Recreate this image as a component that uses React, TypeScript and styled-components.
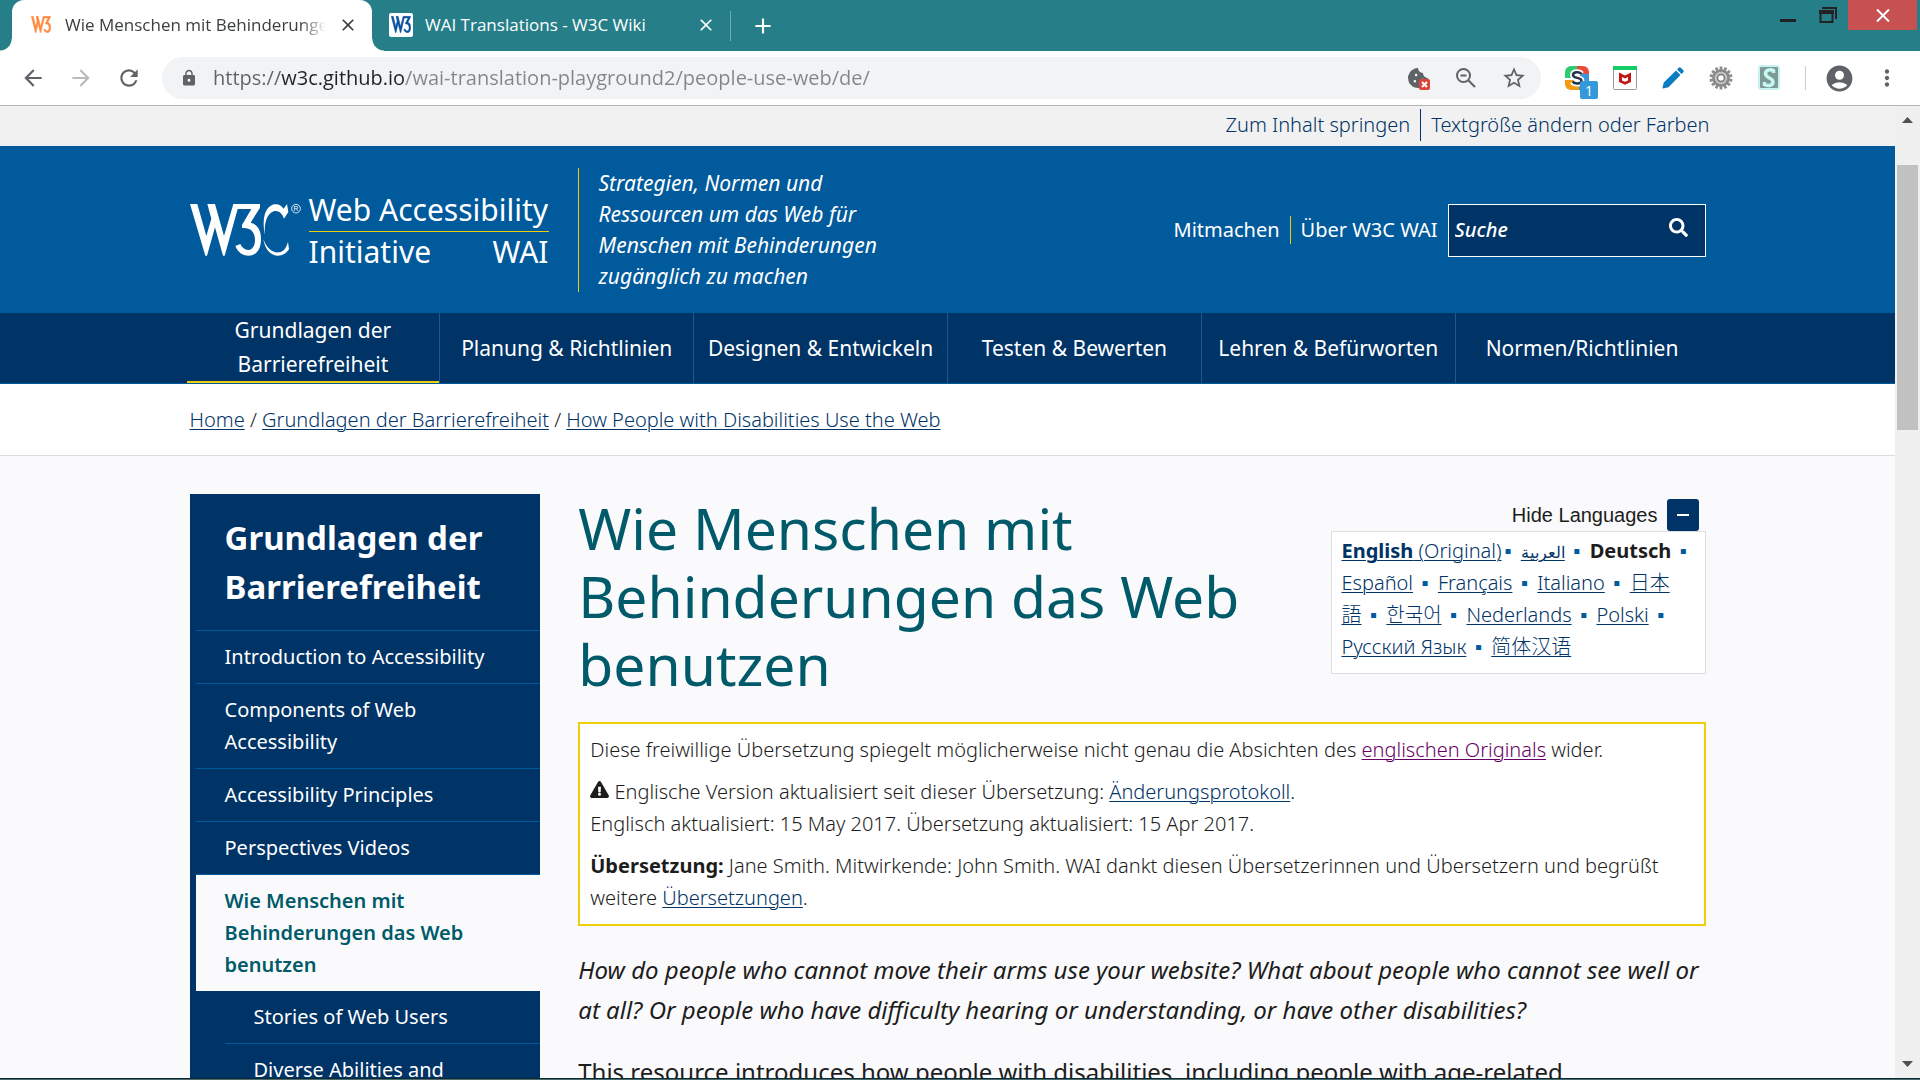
import React from 'react';
import styled, { createGlobalStyle, css } from 'styled-components';
import {
  MdAdd,
  MdAccountCircle,
  MdArrowBack,
  MdArrowForward,
  MdClose,
  MdLock,
  MdMoreVert,
  MdRefresh,
  MdStarBorder,
} from 'react-icons/md';
import { FaCookieBite, FaExclamationTriangle, FaSearch } from 'react-icons/fa';

const color = {
  teal: '#257e88',
  navy: '#003366',
  blue: '#005a9c',
  yellow: '#eed009',
  pale: '#fafafc',
  heading: '#005a6a',
  text: '#1d1d1d',
  visited: '#660066',
  chrome: '#5f6368',
};

const GlobalStyle = createGlobalStyle`
  *, *::before, *::after { box-sizing: border-box; }
  body {
    margin: 0;
    overflow: hidden;
    font-family: 'Noto Sans', 'Noto Sans CJK SC', sans-serif;
    color: ${color.text};
  }
  a { color: ${color.navy}; text-decoration-thickness: 1px; text-underline-offset: 2px; }
  strong { font-weight: 700; }
  button { border: 0; padding: 0; background: none; color: inherit; font: inherit; }
  ul { list-style: none; margin: 0; padding: 0; }
  p, h1, h2 { margin: 0; }
`;

/* ---------- browser window ---------- */

const Window = styled.div`
  display: flex;
  flex-direction: column;
  height: 100vh;
  background: #fff;
`;

const TabStrip = styled.div`
  display: flex;
  align-items: stretch;
  height: 51px;
  padding-left: 12px;
  background: ${color.teal};
  font-family: 'Open Sans', sans-serif;
  font-size: 17px;
`;

const Tab = styled.div<{ $active?: boolean }>`
  position: relative;
  display: flex;
  align-items: center;
  gap: 12px;
  width: ${(p) => (p.$active ? 360 : 358)}px;
  padding: 0 14px 2px 17px;
  color: #fff;
  ${(p) =>
    p.$active &&
    css`
      color: #3c4043;
      background: #fff;
      border-radius: 12px 12px 0 0;
      &::before,
      &::after {
        content: '';
        position: absolute;
        bottom: 0;
        width: 12px;
        height: 12px;
      }
      &::before {
        left: -12px;
        background: radial-gradient(circle at 0 0, transparent 11px, #fff 12px);
      }
      &::after {
        right: -12px;
        background: radial-gradient(circle at 100% 0, transparent 11px, #fff 12px);
      }
    `}
`;

const TabTitle = styled.span<{ $fade?: boolean }>`
  flex: 1;
  min-width: 0;
  overflow: hidden;
  white-space: nowrap;
  ${(p) => p.$fade && css`mask-image: linear-gradient(to right, #000 90%, transparent);`}
`;

const Favicon = styled.span<{ $boxed?: boolean }>`
  display: grid;
  place-items: center;
  width: 24px;
  height: 24px;
  border-radius: 2px;
  color: ${(p) => (p.$boxed ? '#0b4f9e' : '#ff8a3d')};
  background: #fff;
`;

const TabButton = styled.button`
  display: grid;
  place-items: center;
  width: 20px;
  height: 20px;
  font-size: 20px;
`;

const NewTab = styled.button`
  align-self: center;
  display: grid;
  place-items: center;
  width: 64px;
  height: 30px;
  border-left: 1px solid #73adb3;
  color: #fff;
  font-size: 26px;
`;

const WindowControls = styled.div`
  display: flex;
  align-items: flex-start;
  margin-left: auto;
  padding-right: 3px;
`;

const WindowButton = styled.button<{ $close?: boolean }>`
  display: grid;
  place-items: center;
  width: ${(p) => (p.$close ? 69 : 40)}px;
  height: 30px;
  color: ${(p) => (p.$close ? '#fff' : '#222')};
  background: ${(p) => (p.$close ? '#c75050' : 'transparent')};
`;

const Toolbar = styled.div`
  display: flex;
  align-items: center;
  height: 55px;
  padding: 0 9px;
  border-bottom: 1px solid #b5b5b5;
`;

const ToolButton = styled.button`
  position: relative;
  display: grid;
  place-items: center;
  flex: none;
  width: 48px;
  height: 42px;
  color: ${color.chrome};
  font-size: 26px;
  &:disabled { color: #babcbe; }
`;

const Omnibox = styled.label`
  flex: 1;
  display: flex;
  align-items: center;
  height: 42px;
  margin: 0 12px 0 9px;
  padding: 0 3px 0 18px;
  border-radius: 21px;
  background: #f1f3f4;
  color: ${color.chrome};
  font-size: 18px;
  svg { flex: none; }
`;

const AddressInput = styled.input`
  flex: 1;
  min-width: 0;
  margin-left: 15px;
  padding: 0;
  border: 0;
  outline: 0;
  font: 20px/28px 'Open Sans', sans-serif;
  color: transparent;
  background: linear-gradient(to right, #5f6368 68px, #202124 68px 191px, #80868b 191px);
  background-clip: text;
`;

const ToolDivider = styled.span`
  width: 1px;
  height: 24px;
  margin: 0 9px 0 12px;
  background: #ccc;
`;

const CountBadge = styled.span<{ $error?: boolean }>`
  position: absolute;
  right: ${(p) => (p.$error ? 12 : 3)}px;
  bottom: ${(p) => (p.$error ? 9 : 0)}px;
  display: grid;
  place-items: center;
  width: ${(p) => (p.$error ? 11 : 18)}px;
  height: ${(p) => (p.$error ? 11 : 18)}px;
  border-radius: 2px;
  background: ${(p) => (p.$error ? '#dd4437' : '#3498db')};
  color: #fff;
  font: 14px 'Open Sans', sans-serif;
`;

const Viewport = styled.div`
  flex: 1;
  min-height: 0;
  display: flex;
`;

const Page = styled.div`
  flex: 1;
  min-width: 0;
  overflow: hidden;
  background: ${color.pale};
`;

const ScrollTrack = styled.div`
  display: flex;
  flex-direction: column;
  align-items: center;
  width: 25px;
  padding: 10px 0;
  background: #f0f0f0;
  color: #505050;
`;

const ScrollThumb = styled.div`
  width: 21px;
  height: 265px;
  margin: 42px 0 auto;
  background: #c1c1c1;
`;

const Taskbar = styled.div`
  height: 2px;
  border-top: 1px solid #0b2a30;
  background: #4b6b70;
`;

/* ---------- site header ---------- */

const TopBar = styled.nav`
  display: flex;
  justify-content: flex-end;
  align-items: center;
  height: 40px;
  padding: 0 10% 2px;
  background: #f1f1f1;
  font-size: 20px;
  font-weight: 300;
  line-height: 32px;
  ul { display: flex; margin-right: -4px; }
  li + li { margin-left: 10px; padding-left: 10px; border-left: 1px solid ${color.navy}; }
  a { text-decoration: none; }
`;

const Banner = styled.header`
  display: flex;
  align-items: center;
  padding: 22px 10% 21px;
  background: ${color.blue};
  color: #fff;
  a { color: #fff; text-decoration: none; }
`;

const LogoLink = styled.a`
  display: flex;
  align-items: center;
  gap: 8px;
  width: 388px;
`;

const LogoText = styled.span`
  display: block;
  width: 240px;
  font-size: 30px;
  line-height: 39px;
  white-space: nowrap;
`;

const LogoLine = styled.span<{ $ruled?: boolean }>`
  display: flex;
  justify-content: space-between;
  ${(p) => p.$ruled && css`padding-bottom: 2px; border-bottom: 1px solid ${color.yellow};`}
`;

const Tagline = styled.p`
  width: 310px;
  padding-left: 20px;
  border-left: 1px solid ${color.yellow};
  font-size: 21px;
  font-style: italic;
  font-weight: 400;
  line-height: 31px;
`;

const MetaLinks = styled.ul`
  display: flex;
  margin-left: auto;
  font-size: 20px;
  line-height: 28px;
  li + li { margin-left: 10px; padding-left: 10px; border-left: 1px solid ${color.yellow}; }
`;

const SearchForm = styled.form`
  display: flex;
  align-items: center;
  width: 258px;
  height: 53px;
  margin-left: 10px;
  border: 1px solid #fff;
  background: ${color.navy};
`;

const SearchInput = styled.input`
  flex: 1;
  min-width: 0;
  padding: 0 6px;
  border: 0;
  outline: 0;
  background: transparent;
  color: #fff;
  font: italic 500 20px/30px 'Noto Sans', sans-serif;
  &::placeholder { color: #fff; opacity: 1; }
`;

const SearchButton = styled.button`
  width: 53px;
  height: 100%;
  padding-bottom: 2px;
  font-size: 19px;
  line-height: 19px;
`;

const MainNav = styled.nav`
  padding: 0 10%;
  border-bottom: 1px solid ${color.blue};
  background: ${color.navy};
  ul { display: flex; margin: 0 -3px; }
`;

const NavItem = styled.li<{ $current?: boolean }>`
  flex: 1;
  display: flex;
  height: 70px;
  border-bottom: ${(p) => (p.$current ? `2px solid ${color.yellow}` : '0')};
  & + & { border-left: 1px solid #205493; }
  a {
    flex: 1;
    display: flex;
    align-items: center;
    justify-content: center;
    padding: 0 8px;
    color: #fff;
    font-size: 21px;
    line-height: 34px;
    text-align: center;
    text-decoration: none;
  }
`;

const Breadcrumbs = styled.nav`
  padding: 20px 10% 19px;
  border-bottom: 1px solid #ddd;
  background: #fff;
  font-size: 20px;
  font-weight: 300;
  line-height: 32px;
`;

/* ---------- page body ---------- */

const Columns = styled.div`
  display: grid;
  grid-template-columns: 351fr 1128fr;
  gap: 38px;
  padding: 38px 10% 0;
`;

const Sidebar = styled.nav`
  align-self: start;
  padding-left: 6px;
  background: ${color.navy};
  color: #fff;
  font-size: 20px;
  line-height: 32px;
`;

const SidebarTitle = styled.h2`
  padding: 19px 29px;
  font-size: 33px;
  line-height: 49px;
`;

const SideItem = styled.li<{ $first?: boolean }>`
  border-top: ${(p) => (p.$first ? '0' : `1px solid ${color.blue}`)};
`;

const SideLink = styled.a<{ $current?: boolean }>`
  display: block;
  padding: 10px 50px 10px 29px;
  color: #fff;
  text-decoration: none;
  ${(p) =>
    p.$current &&
    css`
      background: ${color.pale};
      color: ${color.heading};
      font-weight: 600;
    `}
`;

const SubList = styled.ul`
  margin-left: 29px;
`;

const TitleRow = styled.div`
  display: flex;
  align-items: flex-start;
  justify-content: space-between;
  gap: 38px;
  margin-bottom: 24px;
`;

const Title = styled.h1`
  flex: 1;
  color: ${color.heading};
  font-size: 57px;
  font-weight: 400;
  line-height: 68px;
`;

const Languages = styled.section`
  width: 375px;
  padding-top: 5px;
`;

const LanguageToggle = styled.button`
  display: flex;
  align-items: center;
  justify-content: flex-end;
  gap: 9px;
  width: 100%;
  padding-right: 7px;
  font: 20px/32px 'Liberation Sans', sans-serif;
  color: ${color.text};
`;

const ToggleIcon = styled.span`
  display: grid;
  place-items: center;
  width: 32px;
  height: 32px;
  border-radius: 3px;
  background: ${color.navy};
`;

const LanguageList = styled.ul`
  padding: 3px 10px 10px;
  border: 1px solid #ddd;
  background: #fff;
  font-size: 20px;
  font-weight: 300;
  line-height: 32px;
  li { display: inline; }
  [lang='ar'] { font-size: 16px; line-height: 20px; }
`;

const LanguageDot = styled.span`
  margin: 0 4px 0 3px;
  font-family: 'Liberation Sans', sans-serif;
  line-height: 20px;
  color: ${color.blue};
`;

const Notice = styled.section`
  display: grid;
  gap: 10px;
  margin-bottom: 24px;
  padding: 10px;
  border: 2px solid ${color.yellow};
  background: #fff;
  font-size: 20px;
  font-weight: 300;
  line-height: 32px;
`;

const VisitedLink = styled.a`
  color: ${color.visited};
`;

const Lead = styled.p`
  margin-bottom: 22px;
  font-size: 24px;
  line-height: 40px;
`;

/* ---------- drawings ---------- */

const W3_PATH =
  'M27 42H49L76 138L91 86L79 42H102L129 138L157 42H237V53L209 98C232 104 240 124 240 147C240 178 226 197 203 197C184 197 171 187 163 168L178 162C183 173 191 180 202 180C214 180 222 167 222 150C222 124 207 114 189 114H183V105L211 57H170L131 197H126L102 112L78 197H73Z';

const W3CLogo = () => (
  <svg width="111" height="54" viewBox="27 39 333 162" fill="#fff" role="img" aria-label="W3C">
    <path d={W3_PATH} />
    <path d="M318 42L322 66L309 86C303 68 290 60 278 64C258 71 249 97 252 134C243 92 249 50 280 43C292 41 302 47 308 56Z" />
    <path d="M247 148C258 177 276 190 295 187C307 185 316 174 321 155L324 178C315 192 302 198 287 197C266 195 252 176 247 148Z" />
    <circle cx="345" cy="56" r="13" fill="none" stroke="#fff" strokeWidth="2.500" />
    <text x="345" y="63" fontSize="20" textAnchor="middle" fontFamily="Liberation Sans">R</text>
  </svg>
);

const W3Icon = () => (
  <svg width="20" height="17" viewBox="24 39 219 161" preserveAspectRatio="none" fill="currentColor">
    <path d={W3_PATH} stroke="currentColor" strokeWidth="5" />
  </svg>
);

const ZoomOutIcon = () => (
  <svg width="22" height="22" viewBox="0 0 22 22" fill="none" stroke="currentColor" strokeWidth="2">
    <circle cx="8.500" cy="8.500" r="6.500" />
    <path d="M13.500 13.500L20 20M5.500 8.500h6" />
  </svg>
);

const ColorSIcon = () => (
  <svg width="24" height="24" viewBox="0 0 24 24">
    <path d="M6 0h6v12H0V6a6 6 0 0 1 6-6z" fill="#2ecc71" />
    <path d="M12 0h6a6 6 0 0 1 6 6v2H12z" fill="#e74c3c" />
    <path d="M12 8h12v10a6 6 0 0 1-6 6h-6z" fill="#3498db" />
    <path d="M0 14h14v10H6a6 6 0 0 1-6-6z" fill="#f39c12" />
    <path
      d="M16.500 8C14.500 5.500 8 5.500 8 9c0 3.800 8.500 2 8.500 5.700 0 3.600-7 3.600-9 .8"
      fill="none" stroke="#fff" strokeWidth="6"
    />
    <path
      d="M16.500 8C14.500 5.500 8 5.500 8 9c0 3.800 8.500 2 8.500 5.700 0 3.600-7 3.600-9 .8"
      fill="none" stroke="#26324a" strokeWidth="2.500"
    />
  </svg>
);

const ShieldIcon = () => (
  <svg width="24" height="24" viewBox="0 0 24 24">
    <rect x="0.500" y="0.500" width="23" height="23" rx="1" fill="#fff" stroke="#999" />
    <path d="M0 0h24v4H0z" fill="#13ce66" />
    <path d="M6 6.500l6 3 6-3v9.500l-6 2.800-6-2.800zM9 11v3.500l3 1.300 3-1.300V11l-3 1.500z" fill="#c01818" fillRule="evenodd" />
  </svg>
);

const PencilIcon = () => (
  <svg width="22" height="22" viewBox="0 0 22 22" fill="#0b7cc1">
    <path d="M15 2.500l1.800-1.800q1-1 2 0l2.500 2.500q1 1 0 2L19.500 7zM14 3.500L18.500 8 6.500 20.300l-5.500 1.200q-.8 0-.5-.8L1.800 15.500z" />
  </svg>
);

const GearIcon = () => (
  <svg width="24" height="24" viewBox="-12 -12 24 24">
    {Array.from({ length: 14 }, (_, i) => (
      <rect key={i} x="-1.400" y="-11.500" width="2.800" height="5" fill="#8f8f8f" transform={`rotate(${(i * 360) / 14})`} />
    ))}
    <circle r="7.500" fill="#c4c4c4" stroke="#8a8a8a" strokeWidth="2.500" />
    <circle r="3.500" fill="#fff" stroke="#777" strokeWidth="1.500" />
  </svg>
);

const GreenSIcon = () => (
  <svg width="24" height="26" viewBox="0 0 24 26">
    <rect x="2" y="1" width="20" height="23" rx="2" fill="#7d9b94" stroke="#c6f3ef" strokeWidth="2" />
    <path d="M16.500 8V5.500C13 3.800 8.500 5 8.500 8.500c0 5 7.500 4 7.500 8.500 0 3.500-4.500 4.500-8.500 2.500V17" fill="none" stroke="#c6f7f3" strokeWidth="3.500" />
  </svg>
);

const ScrollArrow = ({ down }: { down?: boolean }) => (
  <svg width="11" height="7" viewBox="0 0 11 7" fill="currentColor">
    <path d={down ? 'M0 0h11L5.500 6z' : 'M0 7h11L5.500 1z'} />
  </svg>
);

/* ---------- content ---------- */

const navItems = [
  'Grundlagen der Barrierefreiheit',
  'Planung & Richtlinien',
  'Designen & Entwickeln',
  'Testen & Bewerten',
  'Lehren & Befürworten',
  'Normen/Richtlinien',
];

const sideItems = [
  'Introduction to Accessibility',
  'Components of Web Accessibility',
  'Accessibility Principles',
  'Perspectives Videos',
];

const subItems = ['Stories of Web Users', 'Diverse Abilities and Barriers'];

const languages = [
  { code: 'ar', name: 'العربية' },
  { code: 'de', name: 'Deutsch', current: true },
  { code: 'es', name: 'Español' },
  { code: 'fr', name: 'Français' },
  { code: 'it', name: 'Italiano' },
  { code: 'ja', name: '日本語' },
  { code: 'ko', name: '한국어' },
  { code: 'nl', name: 'Nederlands' },
  { code: 'pl', name: 'Polski' },
  { code: 'ru', name: 'Русский Язык' },
  { code: 'zh-hans', name: '简体汉语' },
];

const BrowserChrome = () => (
  <>
    <TabStrip>
      <Tab $active>
        <Favicon><W3Icon /></Favicon>
        <TabTitle $fade>Wie Menschen mit Behinderungen das Web benutzen</TabTitle>
        <TabButton aria-label="Close tab"><MdClose /></TabButton>
      </Tab>
      <Tab>
        <Favicon $boxed><W3Icon /></Favicon>
        <TabTitle>WAI Translations - W3C Wiki</TabTitle>
        <TabButton aria-label="Close tab"><MdClose /></TabButton>
      </Tab>
      <NewTab aria-label="New tab"><MdAdd /></NewTab>
      <WindowControls>
        <WindowButton aria-label="Minimize">
          <svg width="16" height="16" fill="currentColor"><path d="M0 12h16v3H0z" /></svg>
        </WindowButton>
        <WindowButton aria-label="Restore">
          <svg width="18" height="16" fill="none" stroke="currentColor">
            <path d="M3 1h14v11" strokeWidth="2" />
            <path d="M1.500 4v11h12V4z" strokeWidth="2" />
            <path d="M0 5h15" strokeWidth="4" />
          </svg>
        </WindowButton>
        <WindowButton $close aria-label="Close window">
          <svg width="14" height="13" stroke="currentColor" strokeWidth="2"><path d="M1 0.500l12 12M13 0.500l-12 12" /></svg>
        </WindowButton>
      </WindowControls>
    </TabStrip>
    <Toolbar>
      <ToolButton aria-label="Back"><MdArrowBack /></ToolButton>
      <ToolButton aria-label="Forward" disabled><MdArrowForward /></ToolButton>
      <ToolButton aria-label="Reload"><MdRefresh /></ToolButton>
      <Omnibox>
        <MdLock />
        <AddressInput
          aria-label="Address"
          defaultValue="https://w3c.github.io/wai-translation-playground2/people-use-web/de/"
        />
        <ToolButton aria-label="Cookies blocked">
          <FaCookieBite size={20} />
          <CountBadge $error>
            <svg width="7" height="7" stroke="#fff" strokeWidth="2"><path d="M1 1l5 5M6 1l-5 5" /></svg>
          </CountBadge>
        </ToolButton>
        <ToolButton aria-label="Zoom"><ZoomOutIcon /></ToolButton>
        <ToolButton aria-label="Bookmark"><MdStarBorder /></ToolButton>
      </Omnibox>
      <ToolButton aria-label="Extension">
        <ColorSIcon />
        <CountBadge>1</CountBadge>
      </ToolButton>
      <ToolButton aria-label="Security"><ShieldIcon /></ToolButton>
      <ToolButton aria-label="Editor"><PencilIcon /></ToolButton>
      <ToolButton aria-label="Settings"><GearIcon /></ToolButton>
      <ToolButton aria-label="Stylish"><GreenSIcon /></ToolButton>
      <ToolDivider />
      <ToolButton aria-label="Profile"><MdAccountCircle size={31} /></ToolButton>
      <ToolButton aria-label="Menu"><MdMoreVert /></ToolButton>
    </Toolbar>
  </>
);

const SiteHeader = () => (
  <>
    <TopBar aria-label="Skip links">
      <ul>
        <li><a href="#main">Zum Inhalt springen</a></li>
        <li><a href="#size">Textgröße ändern oder Farben</a></li>
      </ul>
    </TopBar>
    <Banner>
      <LogoLink href="#home">
        <W3CLogo />
        <LogoText>
          <LogoLine $ruled>Web Accessibility</LogoLine>
          <LogoLine><span>Initiative</span><span>WAI</span></LogoLine>
        </LogoText>
      </LogoLink>
      <Tagline>
        Strategien, Normen und Ressourcen um das Web für Menschen mit Behinderungen zugänglich zu machen
      </Tagline>
      <MetaLinks>
        <li><a href="#participate">Mitmachen</a></li>
        <li><a href="#about">Über W3C WAI</a></li>
      </MetaLinks>
      <SearchForm role="search">
        <SearchInput type="search" placeholder="Suche" aria-label="Suche" />
        <SearchButton type="button" aria-label="Suchen"><FaSearch /></SearchButton>
      </SearchForm>
    </Banner>
    <MainNav aria-label="Main">
      <ul>
        {navItems.map((item, i) => (
          <NavItem key={item} $current={i === 0}><a href="#nav">{item}</a></NavItem>
        ))}
      </ul>
    </MainNav>
    <Breadcrumbs aria-label="Breadcrumb">
      <a href="#home">Home</a> / <a href="#fundamentals">Grundlagen der Barrierefreiheit</a> /{' '}
      <a href="#people">How People with Disabilities Use the Web</a>
    </Breadcrumbs>
  </>
);

const SideMenu = () => (
  <Sidebar aria-label="Section">
    <SidebarTitle>Grundlagen der Barrierefreiheit</SidebarTitle>
    <ul>
      {sideItems.map((item) => (
        <SideItem key={item}><SideLink href="#side">{item}</SideLink></SideItem>
      ))}
      <SideItem>
        <SideLink $current href="#current">Wie Menschen mit Behinderungen das Web benutzen</SideLink>
        <SubList>
          {subItems.map((item, i) => (
            <SideItem key={item} $first={i === 0}><SideLink href="#sub">{item}</SideLink></SideItem>
          ))}
        </SubList>
      </SideItem>
    </ul>
  </Sidebar>
);

const LanguagePicker = () => (
  <Languages>
    <LanguageToggle aria-expanded="true">
      Hide Languages
      <ToggleIcon>
        <svg width="12" height="2" fill="#fff"><path d="M0 0h12v2H0z" /></svg>
      </ToggleIcon>
    </LanguageToggle>
    <LanguageList>
      <li>
        <a href="#en"><strong>English</strong> (Original)</a>
        <LanguageDot>▪</LanguageDot>{' '}
      </li>
      {languages.map((l, i) => (
        <li key={l.code}>
          {l.current ? <strong>{l.name}</strong> : <a href={`#${l.code}`} lang={l.code}>{l.name}</a>}
          {i < languages.length - 1 && <LanguageDot>{'\u00a0▪'}</LanguageDot>}{' '}
        </li>
      ))}
    </LanguageList>
  </Languages>
);

const Article = () => (
  <main id="main">
    <TitleRow>
      <Title>Wie Menschen mit Behinderungen das Web benutzen</Title>
      <LanguagePicker />
    </TitleRow>
    <Notice>
      <p>
        Diese freiwillige Übersetzung spiegelt möglicherweise nicht genau die Absichten des{' '}
        <VisitedLink href="#original">englischen Originals</VisitedLink> wider.
      </p>
      <p>
        <FaExclamationTriangle size={19} /> Englische Version aktualisiert seit dieser Übersetzung:{' '}
        <a href="#changes">Änderungsprotokoll</a>.
        <br />
        Englisch aktualisiert: 15 May 2017. Übersetzung aktualisiert: 15 Apr 2017.
      </p>
      <p>
        <strong>Übersetzung:</strong> Jane Smith. Mitwirkende: John Smith. WAI dankt diesen
        Übersetzerinnen und Übersetzern und begrüßt weitere <a href="#translations">Übersetzungen</a>.
      </p>
    </Notice>
    <Lead>
      <em>
        How do people who cannot move their arms use your website? What about people who cannot see
        well or at all? Or people who have difficulty hearing or understanding, or have other
        disabilities?
      </em>
    </Lead>
    <Lead>
      This resource introduces how people with disabilities, including people with age-related
      impairments, use the Web.
    </Lead>
  </main>
);

export default function App() {
  return (
    <Window>
      <GlobalStyle />
      <BrowserChrome />
      <Viewport>
        <Page>
          <SiteHeader />
          <Columns>
            <SideMenu />
            <Article />
          </Columns>
        </Page>
        <ScrollTrack>
          <ScrollArrow />
          <ScrollThumb />
          <ScrollArrow down />
        </ScrollTrack>
      </Viewport>
      <Taskbar />
    </Window>
  );
}
